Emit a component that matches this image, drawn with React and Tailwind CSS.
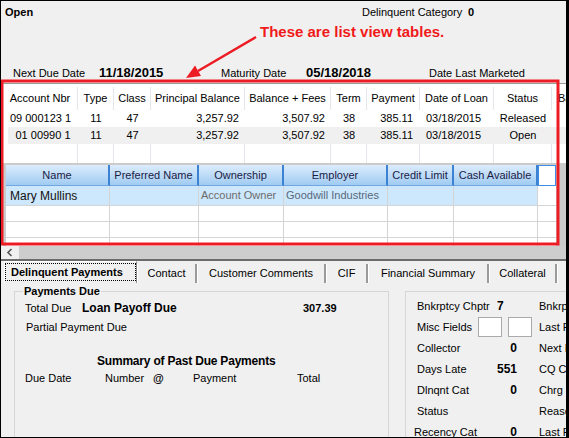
import React from 'react';

const LV_COLS = [
  { label: 'Account Nbr', w: 'w-[75px]', head: 'justify-center', cell: 'text-center' },
  { label: 'Type', w: 'w-[36px]', head: 'justify-center', cell: 'text-center' },
  { label: 'Class', w: 'w-[37px]', head: 'justify-center', cell: 'text-center' },
  { label: 'Principal Balance', w: 'w-[94px]', head: 'justify-center', cell: 'text-right pr-[6px]' },
  { label: 'Balance + Fees', w: 'w-[86px]', head: 'justify-center', cell: 'text-right pr-[6px]' },
  { label: 'Term', w: 'w-[36px]', head: 'justify-center', cell: 'text-center' },
  { label: 'Payment', w: 'w-[53px]', head: 'justify-center', cell: 'text-right pr-[7px]' },
  { label: 'Date of Loan', w: 'w-[74px]', head: 'justify-center', cell: 'text-left pl-[6px]' },
  { label: 'Status', w: 'w-[58px]', head: 'justify-center', cell: 'text-center' },
  { label: 'Balance', w: 'w-[80px]', head: 'justify-start pl-[6px]', cell: 'text-left pl-[6px]' },
];

const LV_ROWS = [
  ['09 000123 1', '11', '47', '3,257.92', '3,507.92', '38', '385.11', '03/18/2015', 'Released', ''],
  ['01 00990 1', '11', '47', '3,257.92', '3,507.92', '38', '385.11', '03/18/2015', 'Open', ''],
];

const GRID_COLS = [
  { label: 'Name', w: 'w-[104px]' },
  { label: 'Preferred Name', w: 'w-[89px]' },
  { label: 'Ownership', w: 'w-[85px]' },
  { label: 'Employer', w: 'w-[104px]' },
  { label: 'Credit Limit', w: 'w-[66px]' },
  { label: 'Cash Available', w: 'w-[84px]' },
];

const TABS = [
  { label: 'Contact', w: 'w-[60px]' },
  { label: 'Customer Comments', w: 'w-[129px]' },
  { label: 'CIF', w: 'w-[42px]' },
  { label: 'Financial Summary', w: 'w-[121px]' },
  { label: 'Collateral', w: 'w-[68px]' },
  { label: 'Notes', w: 'w-[70px]' },
];

const INFO_ROWS = [
  { label: 'Bnkrptcy Chptr', value: '7', kind: 'left', side: 'Bnkrptcy Date' },
  { label: 'Misc Fields', kind: 'boxes', side: 'Last Payment' },
  { label: 'Collector', value: '0', side: 'Next Payment' },
  { label: 'Days Late', value: '551', side: 'CQ Code' },
  { label: 'Dlnqnt Cat', value: '0', side: 'Chrg Off Code' },
  { label: 'Status', value: '', side: 'Reason' },
  { label: 'Recency Cat', value: '0', side: 'Last Review', shift: true },
];

function LoanList() {
  return (
    <div className="h-[80px] border-t border-[#9a9a9a] bg-white overflow-hidden">
      <div className="flex h-[26px] pt-[3px]">
        {LV_COLS.map((c) => (
          <div key={c.label} className={`${c.w} ${c.head} shrink-0 h-[23px] flex items-center border-r border-[#e3e7ec] whitespace-nowrap`}>
            {c.label}
          </div>
        ))}
      </div>
      {LV_ROWS.map((r, i) => (
        <div key={i} className={`flex h-[17px] items-center ${i === 1 ? 'bg-[#f0f0f0] ml-[5px]' : ''}`}>
          {r.map((v, j) => (
            <div
              key={j}
              className={`${i === 1 && j === 0 ? 'w-[70px]' : LV_COLS[j].w} ${LV_COLS[j].cell} shrink-0 whitespace-nowrap`}
            >
              {v}
            </div>
          ))}
        </div>
      ))}
      <div className="flex h-[19px]">
        {LV_COLS.map((c) => (
          <div key={c.label} className={`${c.w} shrink-0 border-r border-[#e3e7ec]`} />
        ))}
      </div>
    </div>
  );
}

function OwnerGrid() {
  const empty = (h, k) => (
    <div key={k} className={`flex ${h}`}>
      {GRID_COLS.map((c) => (
        <div key={c.label} className={`${c.w} shrink-0 bg-white border-r border-b border-[#d4d4d4]`} />
      ))}
      <div className="w-[18px] shrink-0 bg-white border-b border-[#d4d4d4]" />
    </div>
  );
  return (
    <div className="h-[83px] bg-[#cbcbcb] pt-[2px] pl-[3px] overflow-hidden">
      <div className="flex h-[21px]">
        {GRID_COLS.map((c) => (
          <div
            key={c.label}
            className={`${c.w} shrink-0 flex items-center justify-center bg-linear-to-b from-[#dcecfc] to-[#a0cbf2] border-r-2 border-b border-r-[#3d82d2] border-b-[#6fa7de] text-[#1b1b46] whitespace-nowrap`}
          >
            {c.label}
          </div>
        ))}
        <div className="w-[18px] shrink-0 bg-white border border-[#3d8ee6]" />
      </div>
      <div className="flex h-[20px]">
        {GRID_COLS.map((c, j) => (
          <div
            key={c.label}
            className={`${c.w} shrink-0 flex items-center bg-[#cde8fc] border-r border-b border-[#d4d4d4] whitespace-nowrap ${j === 0 ? 'pl-[4px] text-[12px] text-[#111]' : 'pl-[2px]'} ${j === 2 ? 'text-[#6c6c6c]' : ''} ${j === 3 ? 'text-[#56687c]' : ''}`}
          >
            {j === 0 ? 'Mary Mullins' : j === 2 ? 'Account Owner' : j === 3 ? 'Goodwill Industries' : ''}
          </div>
        ))}
        <div className="w-[18px] shrink-0 bg-white border-b border-[#d4d4d4]" />
      </div>
      {empty('h-[16px]', 'a')}
      {empty('h-[16px]', 'b')}
      {empty('h-[16px]', 'c')}
    </div>
  );
}

function TabStrip() {
  return (
    <div className="flex items-end h-[22px]">
      <div className="ml-[3px] w-[133px] h-[22px] shrink-0 border-l border-t border-white border-r border-r-[#8a8a8a] pt-[1px] px-[0px]">
        <div className="h-[18px] border border-dotted border-black flex items-center pl-[5px] font-bold whitespace-nowrap">
          Delinquent Payments
        </div>
      </div>
      {TABS.map((t) => (
        <div
          key={t.label}
          className={`${t.w} shrink-0 h-[19px] flex items-center justify-center border-l border-white border-r-2 border-r-[#9a9a9a] whitespace-nowrap`}
        >
          {t.label}
        </div>
      ))}
    </div>
  );
}

function PaymentsDue() {
  return (
    <fieldset className="mt-[1px] w-[375px] h-[170px] shrink-0 border border-[#d6d6d6]">
      <legend className="ml-[8px] px-[1px] font-bold leading-[14px]">Payments Due</legend>
      <div className="pl-[10px] leading-[14px]">
        <div className="flex items-baseline mt-[3px] h-[14px]">
          <span className="w-[57px]">Total Due</span>
          <span className="w-[221px] font-bold text-[12px]">Loan Payoff Due</span>
          <span className="font-bold">307.39</span>
        </div>
        <div className="mt-[5px] h-[14px] pl-[1px]">Partial Payment Due</div>
        <div className="mt-[20px] h-[15px] pl-[72px] font-bold text-[12px] leading-[15px] tracking-[-0.2px]">
          Summary of Past Due Payments
        </div>
        <div className="flex mt-[2px] h-[14px]">
          <span className="w-[80px]">Due Date</span>
          <span className="w-[48px]">Number</span>
          <span className="w-[40px] font-bold">@</span>
          <span className="w-[104px]">Payment</span>
          <span>Total</span>
        </div>
      </div>
    </fieldset>
  );
}

function InfoBox() {
  return (
    <div className="mt-[8px] ml-[16px] flex-1 h-[160px] border-t border-l border-[#d6d6d6] pt-[3px] pl-[11px] leading-[14px]">
      {INFO_ROWS.map((r) => (
        <div key={r.label} className="flex items-center h-[21px] whitespace-nowrap">
          <span className={`w-[61px] shrink-0 ${r.shift ? '-ml-[3px] mr-[3px]' : ''}`}>{r.label}</span>
          <div className="w-[61px] shrink-0 flex items-center">
            {r.kind === 'boxes' ? (
              <>
                <span className="w-[24px] h-[20px] bg-white border border-[#ababab]" />
                <span className="ml-[6px] w-[24px] h-[20px] bg-white border border-[#ababab]" />
              </>
            ) : r.kind === 'left' ? (
              <span className="pl-[19px] font-bold text-[12px]">{r.value}</span>
            ) : (
              <span className="w-[39px] text-right font-bold text-[12px]">{r.value}</span>
            )}
          </div>
          <span>{r.side}</span>
        </div>
      ))}
    </div>
  );
}

export default function App() {
  return (
    <div className="relative w-[569px] h-[438px] overflow-hidden bg-[#f0f0f0] border-l border-t border-b border-r-[3px] border-black font-['Liberation_Sans',Arial,sans-serif] text-[11px] text-black">
      <div className="relative h-[82px]">
        <div className="flex pt-[4px] pl-[4px] leading-[14px] whitespace-nowrap">
          <span className="w-[357px] font-bold">Open</span>
          <span className="w-[106px]">Delinquent Category</span>
          <span className="font-bold">0</span>
        </div>
        <div className="flex items-baseline mt-[46px] pl-[12px] h-[16px] leading-[16px] whitespace-nowrap">
          <span className="w-[86px]">Next Due Date</span>
          <span className="w-[122px] font-bold text-[13px]">11/18/2015</span>
          <span className="w-[85px]">Maturity Date</span>
          <span className="w-[123px] font-bold text-[13px]">05/18/2018</span>
          <span>Date Last Marketed</span>
        </div>
        <span className="absolute left-[259px] top-[22px] text-[15px] leading-[18px] font-bold text-[#f01a1a] whitespace-nowrap">
          These are list view tables.
        </span>
      </div>

      <div className="h-[163px] pl-[2px] overflow-hidden">
        <LoanList />
        <OwnerGrid />
      </div>

      <div className="flex h-[13px]">
        <div className="w-[18px] flex items-center justify-center">
          <svg width="8" height="9" viewBox="0 0 8 9">
            <polyline points="5.5,1 2,4.5 5.5,8" fill="none" stroke="#555" strokeWidth="1.6" />
          </svg>
        </div>
        <div className="flex-1 bg-[#cdcdcd]" />
      </div>
      <div className="h-[2px] bg-[#6b6b6b]" />

      <TabStrip />

      <div className="flex items-start pl-[13px]">
        <PaymentsDue />
        <InfoBox />
      </div>

      <svg className="absolute left-[-1px] top-[-1px] pointer-events-none" width="569" height="438" viewBox="0 0 569 438">
        <rect x="2" y="81" width="556" height="163" fill="none" stroke="#ed1c24" strokeWidth="3" />
        <line x1="256" y1="37" x2="198" y2="71" stroke="#ed1c24" strokeWidth="2.5" />
        <polygon points="186,78 201,76 195,65.5" fill="#ed1c24" />
      </svg>
    </div>
  );
}
